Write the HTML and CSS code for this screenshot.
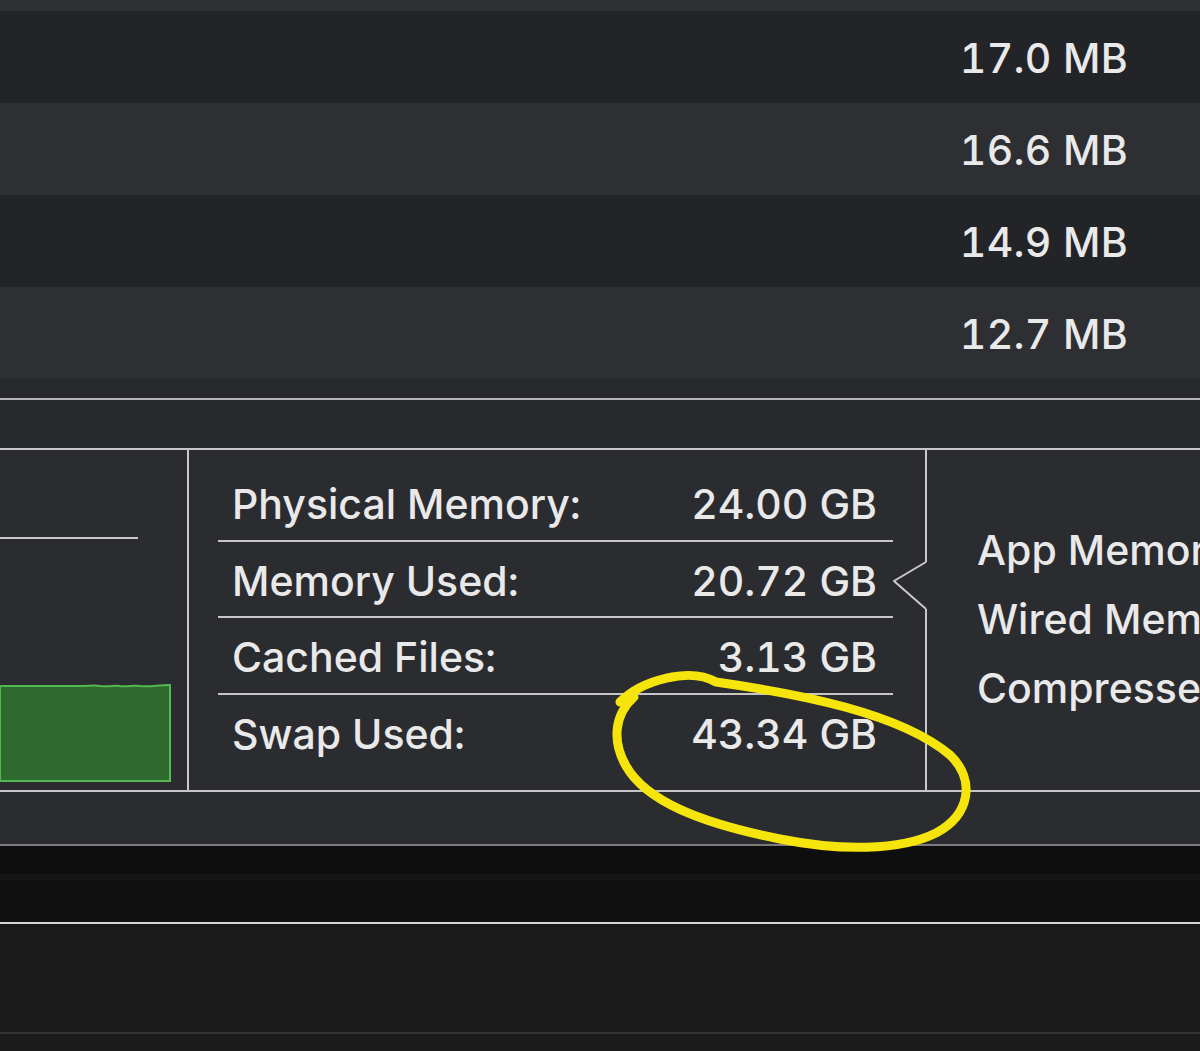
FILE: index.html
```html
<!DOCTYPE html>
<html>
<head>
<meta charset="utf-8">
<link rel="stylesheet" href="styles.css">
</head>
<body>
<div class="screen">
  <div class="topband"></div>
  <div class="rows">
    <div class="row dark"><span class="size">17.0 MB</span></div>
    <div class="row light"><span class="size">16.6 MB</span></div>
    <div class="row dark"><span class="size">14.9 MB</span></div>
    <div class="row light"><span class="size">12.7 MB</span></div>
  </div>
  <div class="tablegap"></div>
  <div class="tabbar"></div>
  <div class="panel">
    <div class="leftcol">
      <div class="chartline"></div>
      <svg class="pressure" width="172" height="100" viewBox="0 0 172 100">
        <path d="M0,2 L80,2 C90,2 95,1 100,2 C110,3 115,1 120,2 C128,3 132,1 140,2 C150,3 158,1 170,1 L170,97 L0,97 Z" fill="#2e6a2f" stroke="#53b84f" stroke-width="2"/>
      </svg>
    </div>
    <div class="vline"></div>
    <div class="midcol">
      <div class="stat"><span>Physical Memory:</span><span>24.00 GB</span></div>
      <div class="stat"><span>Memory Used:</span><span>20.72 GB</span></div>
      <div class="stat"><span>Cached Files:</span><span>3.13 GB</span></div>
      <div class="stat last"><span>Swap Used:</span><span>43.34 GB</span></div>
    </div>
    <div class="divider">
      <svg class="notch" width="40" height="52" viewBox="0 0 40 52">
        <rect x="31" y="0" width="6" height="52" fill="#2b2c30"/>
        <polyline points="33,2 1,21 33,49" fill="none" stroke="#c9c9c9" stroke-width="2"/>
        <line x1="33" y1="0" x2="33" y2="2" stroke="#c9c9c9" stroke-width="2"/>
        <line x1="33" y1="49" x2="33" y2="52" stroke="#c9c9c9" stroke-width="2"/>
      </svg>
    </div>
    <div class="rightcol">
      <div class="rline">App Memory:</div>
      <div class="rline">Wired Memory:</div>
      <div class="rline">Compressed:</div>
    </div>
  </div>
  <div class="belowpanel"></div>
  <div class="footer1"></div>
  <div class="footer2"></div>
  <div class="footer3"></div>
  <svg class="circle" width="1200" height="1051" viewBox="0 0 1200 1051">
    <path d="M620,702 C642,680 690,667 716,682 C800,694 900,713 950,755 C976,780 970,815 936,833 C900,851 840,851 780,839 C700,823 646,801 626,766 C612,741 614,715 634,697" fill="none" stroke="#f6e50c" stroke-width="9" stroke-linecap="round"/>
  </svg>
</div>
</body>
</html>
```

FILE: styles.css
```css
html, body {
  margin: 0;
  padding: 0;
  background: #1b1b1c;
}
.screen {
  position: relative;
  width: 1200px;
  height: 1051px;
  overflow: hidden;
  font-family: Inter, "Noto Sans", sans-serif;
  font-weight: 500;
  font-feature-settings: "tnum" 1;
  letter-spacing: 0;
  color: #e9e9ea;
}
.topband {
  height: 11px;
  background: #2e3033;
}
.row {
  height: 92px;
  display: flex;
  align-items: center;
  justify-content: flex-end;
  padding-right: 72px;
  font-size: 41px;
}
.size {
  letter-spacing: 0.3px;
  margin-top: 2px;
}
.row.dark { background: #232427; }
.row.light { background: #2d2f32; }
.tablegap {
  height: 19px;
  background: #26282b;
  border-bottom: 2px solid #b4b4b4;
}
.tabbar {
  height: 48px;
  background: #27292c;
  border-bottom: 2px solid #c6c6c6;
}
.panel {
  height: 340px;
  display: flex;
  background: #2b2c30;
  border-bottom: 2px solid #c6c6c6;
}
.leftcol {
  width: 187px;
  flex: none;
  display: flex;
  flex-direction: column;
  padding-top: 87px;
  box-sizing: border-box;
}
.chartline {
  width: 138px;
  height: 2px;
  background: #c9c9c9;
}
.pressure {
  display: block;
  margin-top: 145px;
}
.vline {
  width: 2px;
  flex: none;
  background: #c9c9c9;
}
.midcol {
  width: 675px;
  flex: none;
  margin-left: 29px;
  padding-top: 15px;
  display: flex;
  flex-direction: column;
}
.stat {
  height: 70.5px;
  display: flex;
  align-items: center;
  justify-content: space-between;
  padding: 4px 16px 0 14px;
  box-sizing: content-box;
  font-size: 41px;
  border-bottom: 2px solid #c6c6c6;
}
.stat.last {
  border-bottom: none;
}
.divider {
  position: relative;
  width: 2px;
  flex: none;
  margin-left: 32px;
  background: #c9c9c9;
}
.notch {
  position: absolute;
  left: -32px;
  top: 110px;
}
.rightcol {
  padding-left: 50px;
  padding-top: 66px;
  font-size: 41px;
  white-space: nowrap;
}
.rline {
  height: 69px;
  line-height: 69px;
}
.belowpanel {
  height: 52px;
  background: #2a2c2f;
  border-bottom: 2px solid #7b7b7b;
}
.footer1 {
  height: 28px;
  background: #0e0e0e;
  border-bottom: 6px solid #161616;
}
.footer2 {
  height: 42px;
  background: #111112;
  border-bottom: 2px solid #d6d6d6;
  box-shadow: 0 2px 0 #050505;
}
.footer3 {
  height: 108px;
  background: #1a1a1b;
  border-bottom: 2px solid #343434;
}
.circle {
  position: absolute;
  left: 0;
  top: 0;
  pointer-events: none;
}
```
